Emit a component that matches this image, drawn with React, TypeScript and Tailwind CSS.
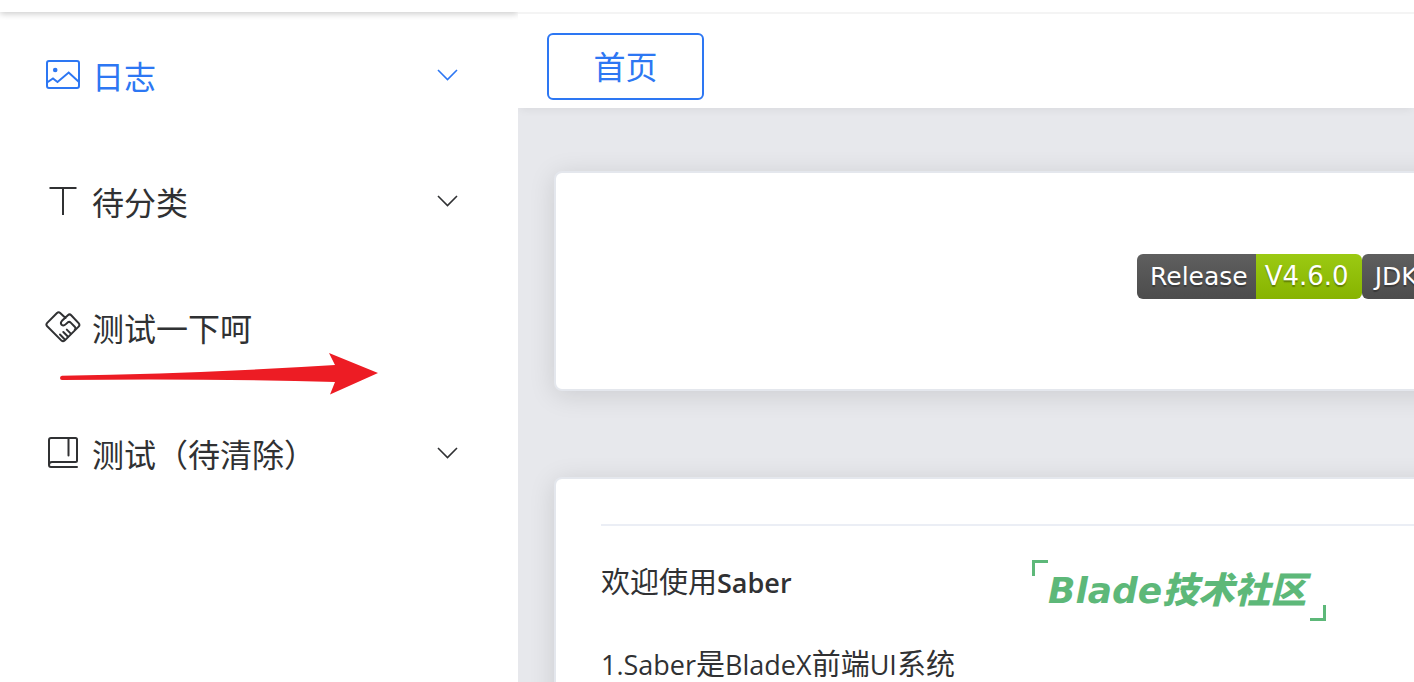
import React from "react";

function ImageIcon() {
  return (
    <svg className="size-9 shrink-0" viewBox="0 0 36 36" fill="none" stroke="currentColor" strokeWidth="2" aria-hidden="true">
      <rect x="2" y="4" width="32" height="27" rx="2" />
      <circle cx="10.2" cy="13" r="2.3" fill="currentColor" stroke="none" />
      <path d="M2 25.5 L8 21.500 L12.500 25 L23.700 15.500 L34 25" />
    </svg>
  );
}

function LetterIcon() {
  return (
    <svg className="size-9 shrink-0" viewBox="0 0 36 36" fill="none" stroke="currentColor" strokeWidth="2" aria-hidden="true">
      <path d="M4.500 5H31.500M18 5V32" />
    </svg>
  );
}

function HandshakeIcon() {
  return (
    <svg className="size-9 shrink-0" viewBox="0 0 36 36" fill="none" stroke="currentColor" strokeWidth="2" strokeLinecap="round" strokeLinejoin="round" aria-hidden="true">
      <path d="M20.5 9 L15.2 4 Q13.6 2.6 12 4 L2.2 13.9 Q0.6 15.6 2.2 17.3 L16.5 31.6 Q18 33 19.6 31.6 L33.6 17.6 Q35.2 16 33.6 14.2 L26.2 6.2 Q24.6 4.6 22.9 6.2 L17 11.8 Q15 14 16.6 15.7 Q18.5 17.4 20.6 15.4 L23 13.2 Q24.5 12.4 25.7 13.6 L30 18 Q31 19.4 29.8 20.8" />
      <path d="M21.8 20.6 L25.8 24.6 M18.3 23 L22.8 27.5 M15 25.5 L19.6 30.2" />
    </svg>
  );
}

function BookIcon() {
  return (
    <svg className="size-9 shrink-0" viewBox="0 0 36 36" fill="none" stroke="currentColor" strokeWidth="2" strokeLinecap="round" aria-hidden="true">
      <path d="M4 30V5Q4 3 6 3H30.5Q32 3 32 4.5V25.5Q32 27 30.5 27H7Q4 27 4 30Q4 32 6 32H32" />
      <path d="M23.5 3V20.5" />
    </svg>
  );
}

function Chevron() {
  return (
    <svg className="ml-auto h-3 w-[21px] shrink-0" viewBox="0 0 21 12" fill="none" stroke="currentColor" strokeWidth="1.6" aria-hidden="true">
      <path d="M1 1 L10.500 10.500 L20 1" />
    </svg>
  );
}

function RedArrow() {
  return (
    <svg className="pointer-events-none absolute left-[60px] top-[353px] h-[42px] w-[319px]" viewBox="0 0 319 42" aria-hidden="true">
      <path fill="#ed1c24" d="M2 22.8 Q140 20.5 275 12 L269 0 L318 20 L270 41.5 L275 29 Q150 25.5 2 27 Q0 27 0 25 Q0 23 2 22.8Z" />
    </svg>
  );
}

const menu = [
  { label: "日志", icon: <ImageIcon />, active: true, expandable: true },
  { label: "待分类", icon: <LetterIcon />, active: false, expandable: true },
  { label: "测试一下呵", icon: <HandshakeIcon />, active: false, expandable: false },
  { label: "测试（待清除）", icon: <BookIcon />, active: false, expandable: true },
];

function Sidebar() {
  return (
    <aside className="w-[518px] shrink-0 overflow-hidden bg-white">
      <div className="h-3 shadow-[0_2px_6px_rgba(0,0,0,0.2)]" />
      <nav>
        {menu.map((item) => (
          <button
            key={item.label}
            type="button"
            className={
              item.active
                ? "flex h-[126px] w-full items-center gap-[11px] pl-[45px] pr-[60px] text-[32px] text-[#2d77f3]"
                : "flex h-[126px] w-full items-center gap-[11px] pl-[45px] pr-[60px] text-[32px] text-[#303133]"
            }
          >
            {item.icon}
            <span className="pt-1">{item.label}</span>
            {item.expandable && <Chevron />}
          </button>
        ))}
      </nav>
    </aside>
  );
}

function Badge({ name, value }: { name: string; value: string }) {
  return (
    <span className="flex h-[45px] shrink-0 overflow-hidden rounded-md text-[25px] leading-[45px] text-white [text-shadow:0_2px_1px_rgba(0,0,0,0.3)]">
      <span className="bg-linear-to-b from-[#5f5f5f] to-[#4c4c4c] pl-[13px] pr-2">{name}</span>
      <span className="bg-linear-to-b from-[#9bca12] to-[#87b300] pl-[9px] pr-[13px] text-[26px]">{value}</span>
    </span>
  );
}

function CommunityMark() {
  return (
    <div className="absolute left-[476px] top-[81px] px-4 py-2 text-[#5db879]">
      <span className="absolute left-0 top-0 size-4 border-l-3 border-t-3 border-[#5db879]" />
      <span className="block whitespace-nowrap pr-1 font-['DejaVu_Sans','Noto_Sans_CJK_SC',sans-serif] text-[36px] font-black italic leading-[45px]">
        Blade技术社区
      </span>
      <span className="absolute bottom-0 right-0 size-4 border-b-3 border-r-3 border-[#5db879]" />
    </div>
  );
}

export default function App() {
  return (
    <div className="relative flex h-screen overflow-hidden bg-white font-['Open_Sans','Noto_Sans_CJK_SC',sans-serif] font-normal text-[#303133]">
      <Sidebar />
      <RedArrow />
      <div className="flex min-w-0 flex-1 flex-col overflow-hidden">
        <div className="h-[14px] shrink-0 border-b-2 border-[#f4f4f4]" />
        <div className="z-10 flex h-[94px] shrink-0 items-start bg-white pl-[29px] pt-[19px] shadow-[0_4px_8px_-2px_rgba(0,0,0,0.06)]">
          <button
            type="button"
            className="h-[67px] min-w-[157px] rounded-md border-2 border-[#2d77f3] px-11 text-[32px] leading-[64px] text-[#2d77f3]"
          >
            首页
          </button>
        </div>
        <main className="flex flex-1 flex-col gap-[86px] overflow-hidden bg-[#e7e8ec] pl-9 pt-[63px]">
          <section className="-mr-10 flex h-[220px] shrink-0 items-center rounded-lg border-2 border-[#e4e7ed] bg-white pb-[10px] pl-[581px] font-['DejaVu_Sans',sans-serif] shadow-[0_4px_27px_rgba(0,0,0,0.12)]">
            <Badge name="Release" value="V4.6.0" />
            <Badge name="JDK" value="1.8+" />
          </section>
          <section className="relative -mr-10 min-h-[240px] shrink-0 rounded-t-lg border-2 border-b-0 border-[#e4e7ed] bg-white pl-[45px] pt-[45px] text-[29px] leading-[42px] shadow-[0_4px_27px_rgba(0,0,0,0.12)]">
            <hr className="border-t-2 border-[#ebeef5]" />
            <p className="mt-[35px]">
              欢迎使用<strong className="text-[27px] font-semibold">Saber</strong>
            </p>
            <p className="mt-[39px]">
              <span className="text-[27px]">1.Saber</span>是<span className="text-[27px]">BladeX</span>前端
              <span className="text-[27px]">UI</span>系统
            </p>
            <CommunityMark />
          </section>
        </main>
      </div>
    </div>
  );
}
